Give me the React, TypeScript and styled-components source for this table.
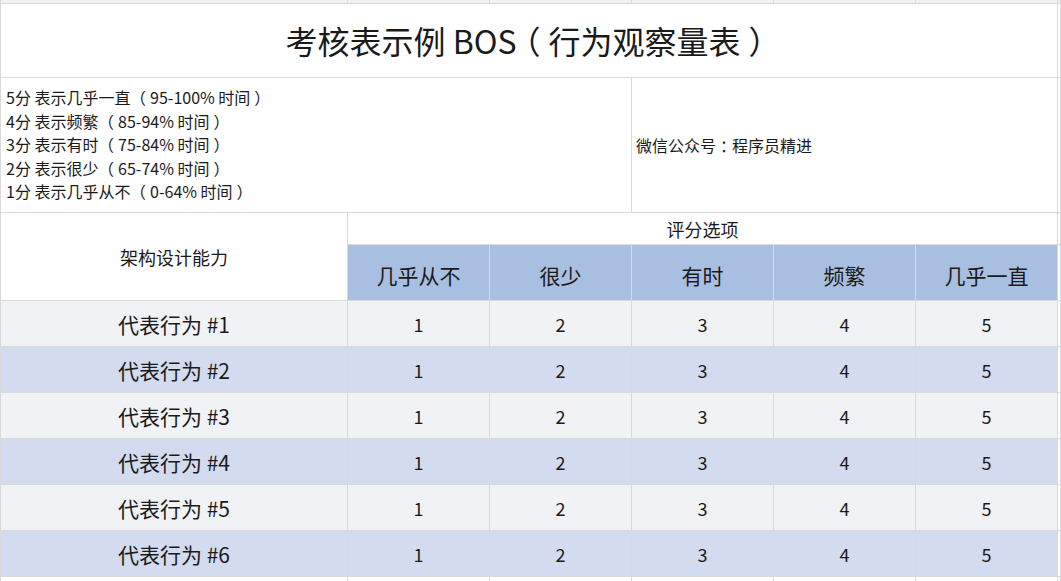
import React from "react";
import styled, { createGlobalStyle } from "styled-components";

const GlobalStyle = createGlobalStyle`
  html, body { margin: 0; padding: 0; background: #ffffff; }
  body { font-family: "Noto Sans CJK SC", "Noto Sans", sans-serif; color: #1a1a1a; overflow: hidden; }
`;

const LINE = "#d9d9d9";

const Sheet = styled.div`
  display: grid;
  grid-template-columns: 347px repeat(5, 142px) 1fr;
  grid-template-rows: 4px 74px 135px 32px 56px repeat(6, 46px) 40px;
  border-left: 1px solid ${LINE};
  width: 1061px;
  height: 581px;
  box-sizing: border-box;
  overflow: hidden;
`;

type CellProps = {
  $bg?: string;
  $col?: string;
  $row?: string;
};

const Cell = styled.div<CellProps>`
  box-sizing: border-box;
  border-right: 1px solid ${LINE};
  border-bottom: 1px solid ${LINE};
  background: ${(p) => p.$bg ?? "#ffffff"};
  grid-column: ${(p) => p.$col ?? "auto"};
  grid-row: ${(p) => p.$row ?? "auto"};
  font-size: 18px;
  display: flex;
  align-items: center;
  justify-content: center;
  white-space: nowrap;
  overflow: hidden;
`;

/* Full-width punctuation drawn centred in its em box */
const Punct = styled.span`
  font-feature-settings: "halt";
  margin: 0 0.25em;
`;

const Title = styled(Cell)`
  font-size: 32px;
  padding-bottom: 2px;
`;

const Notes = styled(Cell)`
  flex-direction: column;
  align-items: flex-start;
  justify-content: center;
  padding-left: 5px;
  font-size: 16px;
  line-height: 23.5px;
`;

const Wechat = styled(Cell)`
  justify-content: flex-start;
  padding-left: 4px;
  font-size: 16px;
`;

const Group = styled(Cell)`
  font-size: 18px;
  padding-top: 1px;
`;

const HeaderCell = styled(Cell)`
  background: #a9bfe2;
  font-size: 21px;
  padding-top: 5px;
`;

const Ability = styled(Cell)`
  font-size: 18px;
  padding-bottom: 0;
`;

const Behavior = styled(Cell)`
  font-size: 21px;
`;

const Score = styled(Cell)`
  font-size: 18px;
`;

const TOP = "#eff1f5";
const ROW_LIGHT = "#f1f2f6";
const ROW_BLUE = "#d3dcee";

const notes: [string, string][] = [
  ["5分 表示几乎一直 ", "95-100% 时间"],
  ["4分 表示频繁 ", "85-94% 时间"],
  ["3分 表示有时 ", "75-84% 时间"],
  ["2分 表示很少 ", "65-74% 时间"],
  ["1分 表示几乎从不 ", "0-64% 时间"],
];

const headers = ["几乎从不", "很少", "有时", "频繁", "几乎一直"];
const behaviors = [1, 2, 3, 4, 5, 6];

export default function App() {
  return (
    <>
      <GlobalStyle />
      <Sheet>
        {Array.from({ length: 7 }).map((_, i) => (
          <Cell key={`top-${i}`} $bg={TOP} />
        ))}

        <Title $col="1 / 7">
          <span>
            考核表示例 BOS<Punct>（</Punct>行为观察量表<Punct>）</Punct>
          </span>
        </Title>
        <Cell />

        <Notes $col="1 / 4">
          {notes.map(([a, b]) => (
            <div key={a}>
              {a}
              <Punct>（</Punct>
              {b}
              <Punct>）</Punct>
            </div>
          ))}
        </Notes>
        <Wechat $col="4 / 7">
          <span>
            微信公众号<Punct>：</Punct>程序员精进
          </span>
        </Wechat>
        <Cell />

        <Ability $row="4 / 6" $col="1 / 2">架构设计能力</Ability>
        <Group $col="2 / 7">评分选项</Group>
        <Cell />

        {headers.map((h) => (
          <HeaderCell key={h}>{h}</HeaderCell>
        ))}
        <Cell />

        {behaviors.map((b, i) => {
          const bg = i % 2 === 0 ? ROW_LIGHT : ROW_BLUE;
          return (
            <React.Fragment key={b}>
              <Behavior $bg={bg}>代表行为 #{b}</Behavior>
              {[1, 2, 3, 4, 5].map((s) => (
                <Score key={s} $bg={bg}>
                  {s}
                </Score>
              ))}
              <Cell />
            </React.Fragment>
          );
        })}

        {Array.from({ length: 7 }).map((_, i) => (
          <Cell key={`bottom-${i}`} />
        ))}
      </Sheet>
    </>
  );
}
